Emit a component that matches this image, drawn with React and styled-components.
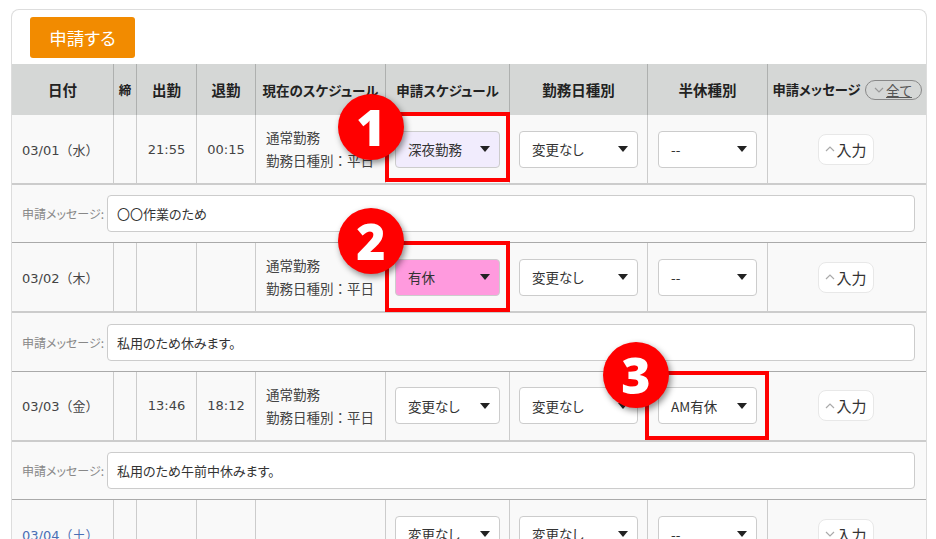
import React from 'react';
import styled, { createGlobalStyle } from 'styled-components';

const GlobalStyle = createGlobalStyle`
  html, body {
    background: #fff;
    height: 100%;
    margin: 0;
    overflow: hidden;
  }

  * {
    box-sizing: border-box;
  }
`;

const columns = '101px 23px 60px 59px 130px 124px 138px 120px 159px';

const Page = styled.div`
  color: #333;
  font-family: 'Noto Sans CJK JP', 'Noto Sans', sans-serif;
  font-feature-settings: 'palt';
  font-size: 13px;
  height: 539px;
  overflow: hidden;
  padding: 9px 9px 0 11px;
  position: relative;
  width: 936px;
`;

const Card = styled.div`
  border: 1px solid #ddd;
  border-bottom: 0;
  border-radius: 8px 8px 0 0;
  height: 560px;
`;

const Toolbar = styled.div`
  align-items: flex-start;
  display: flex;
  height: 54px;
  padding: 7px 0 0 18px;
`;

const SubmitButton = styled.button`
  background: #f28b00;
  border: 0;
  border-radius: 3px;
  color: #fff;
  font-family: inherit;
  font-feature-settings: inherit;
  font-size: 17.5px;
  height: 41px;
  padding: 0;
  width: 105px;
`;

const HeaderRow = styled.div`
  background: #d5d7d6;
  display: grid;
  grid-template-columns: ${columns};
  height: 51px;
`;

const HeaderCell = styled.div`
  align-items: center;
  border-left: ${({ $first }) => ($first ? '0' : '1px solid #aeb0af')};
  color: #222;
  display: flex;
  font-size: ${({ $size }) => $size || 14.5}px;
  font-weight: 700;
  gap: 4px;
  justify-content: center;
  white-space: nowrap;
`;

const AllToggle = styled.span`
  align-items: center;
  border: 1px solid #888;
  border-radius: 10px;
  color: #555;
  display: inline-flex;
  font-size: 13.5px;
  font-weight: 400;
  gap: 2px;
  height: 20px;
  justify-content: center;
  text-decoration: underline;
  width: 57px;
`;

const DayRow = styled.div`
  background: #f9f9f9;
  display: grid;
  grid-template-columns: ${columns};
  height: 68px;
`;

const DayCell = styled.div`
  align-items: center;
  border-left: ${({ $first }) => ($first ? '0' : '1px solid #ccc')};
  color: ${({ $link }) => ($link ? '#4a6fb5' : '#444')};
  display: flex;
  font-family: ${({ $num }) =>
    $num ? "'DejaVu Sans', 'Noto Sans CJK JP', sans-serif" : 'inherit'};
  font-feature-settings: ${({ $num }) => ($num ? 'normal' : 'inherit')};
  font-size: ${({ $num }) => ($num ? '13px' : 'inherit')};
  justify-content: ${({ $start }) => ($start ? 'flex-start' : 'center')};
  padding-left: ${({ $start }) => ($start ? '10px' : '0')};
  padding-right: ${({ $tail }) => ($tail ? '2px' : '0')};
  white-space: nowrap;
`;

const Schedule = styled.div`
  font-feature-settings: normal;
  font-size: 13.5px;
  line-height: 23px;
  white-space: nowrap;
`;

const SelectBox = styled.div`
  align-items: center;
  background: ${({ $bg }) => $bg || '#fff'};
  border: 1px solid #ccc;
  border-radius: 4px;
  color: #333;
  display: flex;
  font-size: 13.5px;
  height: 37px;
  justify-content: space-between;
  padding: 0 9px 0 12px;
  width: ${({ $w }) => $w}px;
`;

const Caret = styled.span`
  border-left: 5px solid transparent;
  border-right: 5px solid transparent;
  border-top: 6px solid #222;
  display: block;
  height: 0;
  width: 0;
`;

const InputToggle = styled.span`
  align-items: center;
  background: #fff;
  border: 1px solid #e8e8e8;
  border-radius: 8px;
  color: #333;
  display: inline-flex;
  font-size: 15px;
  gap: 1px;
  height: 31px;
  justify-content: center;
  width: 56px;
`;

const MessageRow = styled.div`
  align-items: center;
  background: #f9f9f9;
  border-bottom: 1px solid #aaa;
  border-top: 2px solid #ccc;
  display: flex;
  height: 60.4px;
  padding: 0 11px 0 10px;
`;

const MessageLabel = styled.span`
  color: #888;
  flex: none;
  font-size: 12px;
  white-space: nowrap;
  width: 85px;
`;

const MessageInput = styled.div`
  align-items: center;
  background: #fff;
  border: 1px solid #ccc;
  border-radius: 4px;
  display: flex;
  flex: 1;
  font-size: 13px;
  height: 37px;
  padding-left: 9px;
`;

const Highlight = styled.div`
  border: 4px solid #f00;
  height: ${({ $h }) => $h}px;
  left: ${({ $x }) => $x}px;
  position: absolute;
  top: ${({ $y }) => $y}px;
  width: ${({ $w }) => $w}px;
`;

const Badge = styled.div`
  align-items: center;
  background: #f00;
  border-radius: 50%;
  box-shadow: 2px 3px 6px rgba(0, 0, 0, 0.45);
  color: #fff;
  display: flex;
  font-family: 'Open Sans', sans-serif;
  font-size: 50px;
  font-weight: 800;
  height: 66px;
  justify-content: center;
  left: ${({ $x }) => $x}px;
  line-height: 1;
  position: absolute;
  top: ${({ $y }) => $y}px;
  width: 66px;
`;

const Chevron = ({ up, size = 10, color = '#aaa' }) => (
  <svg width={size} height={size * 0.6} viewBox="0 0 10 6" fill="none">
    <path
      d={up ? 'M1 5L5 1L9 5' : 'M1 1L5 5L9 1'}
      stroke={color}
      strokeWidth="1.2"
    />
  </svg>
);

const headers = [
  { label: '日付' },
  { label: '締', size: 12.5 },
  { label: '出勤' },
  { label: '退勤' },
  { label: '現在のスケジュール', size: 13.5 },
  { label: '申請スケジュール', size: 13.5 },
  { label: '勤務日種別' },
  { label: '半休種別' },
];

const rows = [
  {
    date: '03/01（水）',
    start: '21:55',
    end: '00:15',
    current: true,
    request: { label: '深夜勤務', bg: '#f1ecfd' },
    half: '--',
    message: '〇〇作業のため',
  },
  {
    date: '03/02（木）',
    start: '',
    end: '',
    current: true,
    request: { label: '有休', bg: '#ff9ade' },
    half: '--',
    message: '私用のため休みます。',
  },
  {
    date: '03/03（金）',
    start: '13:46',
    end: '18:12',
    current: true,
    request: { label: '変更なし' },
    half: 'AM有休',
    message: '私用のため午前中休みます。',
  },
  {
    date: '03/04（土）',
    start: '',
    end: '',
    current: false,
    link: true,
    request: { label: '変更なし' },
    half: '--',
    down: true,
  },
];

const Select = ({ label, bg, w }) => (
  <SelectBox $bg={bg} $w={w}>
    {label}
    <Caret />
  </SelectBox>
);

export default function App() {
  return (
    <Page>
      <GlobalStyle />
      <Card>
        <Toolbar>
          <SubmitButton>申請する</SubmitButton>
        </Toolbar>
        <HeaderRow>
          {headers.map((h, i) => (
            <HeaderCell key={h.label} $first={i === 0} $size={h.size}>
              {h.label}
            </HeaderCell>
          ))}
          <HeaderCell $size={13.3}>
            申請メッセージ
            <AllToggle>
              <Chevron color="#999" />
              全て
            </AllToggle>
          </HeaderCell>
        </HeaderRow>
        {rows.map((row) => (
          <React.Fragment key={row.date}>
            <DayRow>
              <DayCell $first $start $num $link={row.link}>
                {row.date}
              </DayCell>
              <DayCell />
              <DayCell $num>{row.start}</DayCell>
              <DayCell $num>{row.end}</DayCell>
              <DayCell $start>
                {row.current && (
                  <Schedule>
                    通常勤務
                    <br />
                    勤務日種別：平日
                  </Schedule>
                )}
              </DayCell>
              <DayCell>
                <Select {...row.request} w={105} />
              </DayCell>
              <DayCell>
                <Select label="変更なし" w={119} />
              </DayCell>
              <DayCell>
                <Select label={row.half} w={99} />
              </DayCell>
              <DayCell $tail>
                <InputToggle>
                  <Chevron up={!row.down} />
                  入力
                </InputToggle>
              </DayCell>
            </DayRow>
            {row.message && (
              <MessageRow>
                <MessageLabel>申請メッセージ:</MessageLabel>
                <MessageInput>{row.message}</MessageInput>
              </MessageRow>
            )}
          </React.Fragment>
        ))}
      </Card>
      <Highlight $x={385} $y={112} $w={125} $h={70} />
      <Highlight $x={385} $y={241} $w={125} $h={71} />
      <Highlight $x={645} $y={371} $w={124} $h={69} />
      <Badge $x={338} $y={94}>1</Badge>
      <Badge $x={338} $y={208}>2</Badge>
      <Badge $x={603} $y={342}>3</Badge>
    </Page>
  );
}
